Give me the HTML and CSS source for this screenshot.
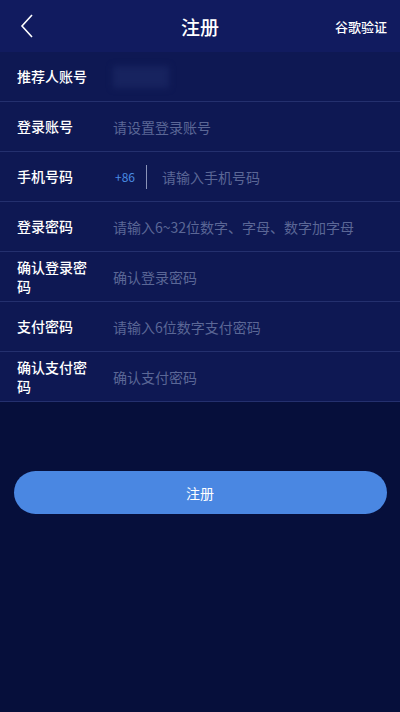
FILE: index.html
```html
<!DOCTYPE html>
<html lang="zh-CN">
<head>
  <meta charset="UTF-8" />
  <meta name="viewport" content="width=device-width, initial-scale=1.0"/>
  <title>注册</title>
  <link rel="stylesheet" href="styles.css">
</head>
<body>
<div class="page">
  <div class="header">
    <span class="back">
      <svg width="14" height="24" viewBox="0 0 14 24"><path d="M12 1 L2 12 L12 23" fill="none" stroke="#fff" stroke-width="1.6"/></svg>
    </span>
    <h1 class="title">注册</h1>
    <span class="google">谷歌验证</span>
  </div>
  <div class="form">
    <div class="row">
      <label class="label">推荐人账号</label>
      <div class="field"><span class="blur"></span></div>
    </div>
    <div class="row">
      <label class="label">登录账号</label>
      <div class="field"><input class="input" placeholder="请设置登录账号"></div>
    </div>
    <div class="row">
      <label class="label">手机号码</label>
      <div class="field">
        <span class="code">+86</span>
        <span class="sep"></span>
        <input class="input" placeholder="请输入手机号码">
      </div>
    </div>
    <div class="row">
      <label class="label">登录密码</label>
      <div class="field"><input class="input" type="password" placeholder="请输入6~32位数字、字母、数字加字母"></div>
    </div>
    <div class="row">
      <label class="label">确认登录密码</label>
      <div class="field"><input class="input" type="password" placeholder="确认登录密码"></div>
    </div>
    <div class="row">
      <label class="label">支付密码</label>
      <div class="field"><input class="input" type="password" placeholder="请输入6位数字支付密码"></div>
    </div>
    <div class="row">
      <label class="label">确认支付密码</label>
      <div class="field"><input class="input" type="password" placeholder="确认支付密码"></div>
    </div>
  </div>
  <button class="submit">注册</button>
</div>
</body>
</html>
```

FILE: styles.css
```css
    body {
      font-family: 'Noto Sans CJK SC', 'Noto Sans', sans-serif;
      margin: 0;
      padding: 0;
      background-color: #060f3b;
      height: 712px;
      overflow: hidden;
    }
    .page {
      height: 712px;
      background-color: #060f3b;
    }
    .header {
      height: 52px;
      background-color: #111b5f;
      display: flex;
      align-items: center;
      justify-content: space-between;
      padding: 0 13px;
    }
    .back {
      display: flex;
      width: 60px;
      padding-left: 7px;
      box-sizing: border-box;
    }
    .title {
      margin: 0;
      font-size: 19px;
      font-weight: 500;
      color: #fff;
    }
    .google {
      width: 60px;
      font-size: 13px;
      font-weight: 500;
      color: #fff;
      text-align: right;
      white-space: nowrap;
    }
    .form {
      background-color: #0e1853;
    }
    .row {
      display: flex;
      align-items: center;
      height: 49px;
      border-bottom: 1px solid #24306e;
      padding: 0 0 0 17px;
    }
    .label {
      width: 80px;
      flex-shrink: 0;
      font-size: 14px;
      line-height: 19px;
      color: #fff;
      font-weight: 500;
    }
    .field {
      display: flex;
      align-items: center;
      flex: 1;
      padding-left: 16px;
    }
    .input {
      flex: 1;
      background: transparent;
      border: none;
      outline: none;
      padding: 0;
      font-family: inherit;
      font-size: 14px;
      color: #fff;
    }
    .input::placeholder {
      color: #5b6796;
    }
    .blur {
      width: 56px;
      height: 22px;
      background-color: #17235f;
      filter: blur(3px);
    }
    .code {
      color: #4a8be2;
      font-size: 12px;
      padding-left: 2px;
    }
    .sep {
      width: 1px;
      height: 24px;
      background-color: #8a93b8;
      margin: 0 15px 0 11px;
    }
    .submit {
      display: block;
      margin: 69px auto 0;
      width: 373px;
      height: 43px;
      border: none;
      border-radius: 22px;
      background-color: #4a87e2;
      color: #fff;
      font-family: inherit;
      font-size: 14px;
      cursor: pointer;
    }
```
